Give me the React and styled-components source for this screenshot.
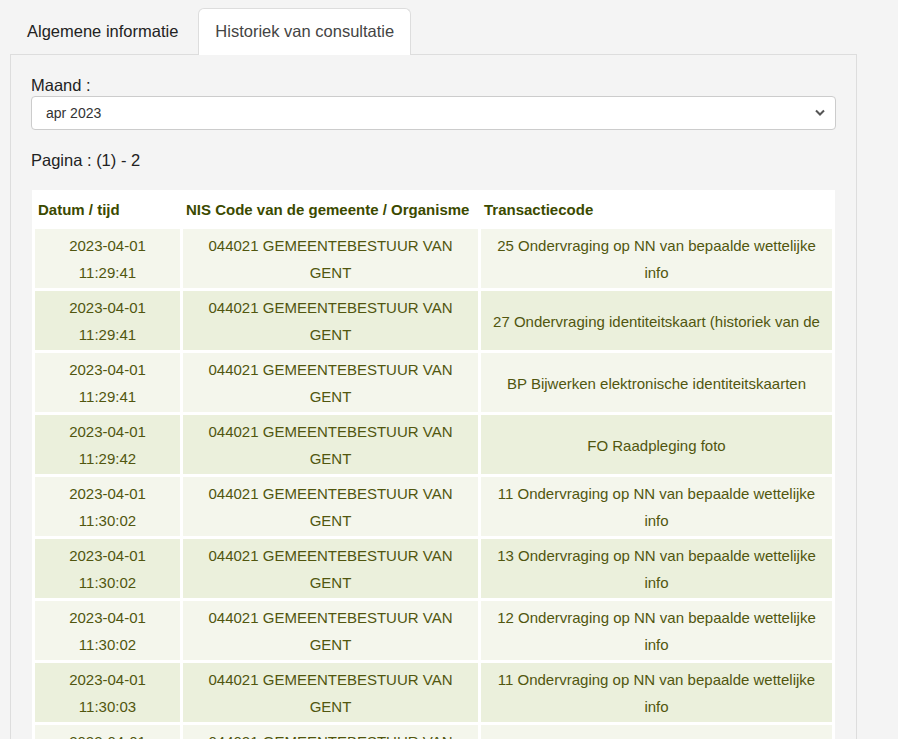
import { useState } from "react";
import styled, { createGlobalStyle } from "styled-components";

const GlobalStyle = createGlobalStyle`
  html, body {
    margin: 0;
    padding: 0;
    background: #f4f4f4;
  }
  body {
    font-family: "Liberation Sans", Arial, sans-serif;
    color: #222;
  }
`;

const Page = styled.div`
  width: 847px;
  padding: 8px 0 0 10px;
`;

const TabBar = styled.ul`
  display: flex;
  gap: 3px;
  list-style: none;
  margin: 0;
  padding: 0;
  position: relative;
  z-index: 1;
`;

const Tab = styled.li`
  padding: 11px 16px 12px 16px;
  font-size: 16.5px;
  line-height: 23px;
  color: ${(p) => (p.active ? "#444" : "#222")};
  background: ${(p) => (p.active ? "#fff" : "transparent")};
  border: 1px solid ${(p) => (p.active ? "#ddd" : "transparent")};
  border-bottom: none;
  border-radius: 6px 6px 0 0;
  margin-bottom: -1px;
  cursor: pointer;
`;

const Panel = styled.div`
  border-top: 1px solid #ddd;
  border-left: 1px solid #ddd;
  border-right: 1px solid #ddd;
  padding: 20px 20px 0 20px;
  min-height: 700px;
`;

const Label = styled.label`
  display: block;
  font-size: 16.5px;
  line-height: 21px;
`;

const SelectWrap = styled.div`
  position: relative;
`;

const Select = styled.select`
  appearance: none;
  width: 100%;
  height: 34px;
  padding: 0 14px;
  font-family: "Liberation Sans", Arial, sans-serif;
  font-size: 14px;
  color: #333;
  background: #fff;
  border: 1px solid #ccc;
  border-radius: 4px;
  outline: none;
`;

const Chevron = styled.svg`
  position: absolute;
  right: 11px;
  top: 13px;
  width: 10px;
  height: 8px;
  pointer-events: none;
`;

const Pager = styled.p`
  margin: 20px 0 0 0;
  font-size: 16.5px;
  line-height: 21px;
`;

const Table = styled.table`
  margin: 19px 1px 0 1px;
  width: calc(100% - 2px);
  background: #fff;
  border-collapse: separate;
  border-spacing: 3px;
  font-size: 15px;
  table-layout: fixed;
`;

const Th = styled.th`
  box-sizing: border-box;
  text-align: left;
  font-weight: bold;
  color: #3b4a00;
  padding: 7px 4px 6px 3px;
  line-height: 20px;
  width: ${(p) => p.w || "auto"};
`;

const Td = styled.td`
  text-align: center;
  vertical-align: middle;
  color: #51560f;
  line-height: 27px;
  padding: 3px 7px 2px 7px;
  background: ${(p) => (p.even ? "#ebf0dc" : "#f4f6ec")};
`;

const rows = [
  ["2023-04-01 11:29:41", "25 Ondervraging op NN van bepaalde wettelijke info"],
  ["2023-04-01 11:29:41", "27 Ondervraging identiteitskaart (historiek van de"],
  ["2023-04-01 11:29:41", "BP Bijwerken elektronische identiteitskaarten"],
  ["2023-04-01 11:29:42", "FO Raadpleging foto"],
  ["2023-04-01 11:30:02", "11 Ondervraging op NN van bepaalde wettelijke info"],
  ["2023-04-01 11:30:02", "13 Ondervraging op NN van bepaalde wettelijke info"],
  ["2023-04-01 11:30:02", "12 Ondervraging op NN van bepaalde wettelijke info"],
  ["2023-04-01 11:30:03", "11 Ondervraging op NN van bepaalde wettelijke info"],
  ["2023-04-01 11:30:03", "FO Raadpleging foto"],
];

const App = () => {
  const [tab, setTab] = useState(1);

  return (
    <Page>
      <GlobalStyle />
      <TabBar>
        <Tab active={tab === 0} onClick={() => setTab(0)}>
          Algemene informatie
        </Tab>
        <Tab active={tab === 1} onClick={() => setTab(1)}>
          Historiek van consultatie
        </Tab>
      </TabBar>
      <Panel>
        <Label htmlFor="maand">Maand :</Label>
        <SelectWrap>
          <Select id="maand" defaultValue="2023-04">
            <option value="2023-04">apr 2023</option>
            <option value="2023-03">mrt 2023</option>
          </Select>
          <Chevron viewBox="0 0 10 8">
            <path d="M1 1.5 L5 5.5 L9 1.5" fill="none" stroke="#555" strokeWidth="2" />
          </Chevron>
        </SelectWrap>
        <Pager>Pagina : (1) - 2</Pager>
        <Table>
          <thead>
            <tr>
              <Th w="145px">Datum / tijd</Th>
              <Th w="295px">NIS Code van de gemeente / Organisme</Th>
              <Th>Transactiecode</Th>
            </tr>
          </thead>
          <tbody>
            {rows.map(([date, code], i) => (
              <tr key={i}>
                <Td even={i % 2 === 1}>{date}</Td>
                <Td even={i % 2 === 1}>044021 GEMEENTEBESTUUR VAN GENT</Td>
                <Td even={i % 2 === 1}>{code}</Td>
              </tr>
            ))}
          </tbody>
        </Table>
      </Panel>
    </Page>
  );
};

export default App;
